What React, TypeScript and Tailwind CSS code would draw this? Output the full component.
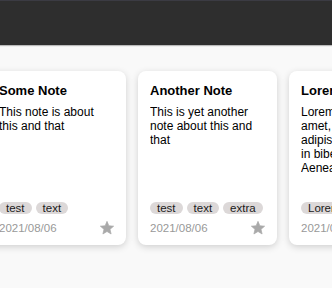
import React from "react";

type Note = { title: string; body: string; tags: string[]; date: string };

const notes: Note[] = [
  {
    title: "Some Note",
    body: "This note is about this and that",
    tags: ["test", "text"],
    date: "2021/08/06",
  },
  {
    title: "Another Note",
    body: "This is yet another note about this and that",
    tags: ["test", "text", "extra"],
    date: "2021/08/06",
  },
  {
    title: "Lorem Ipsum",
    body: "Lorem ipsum dolor sit amet, consectetur adipiscing elit. Fusce in bibendum nisl. Aenean vitae",
    tags: ["Lorem ipsum"],
    date: "2021/08/06",
  },
];

function Star() {
  return (
    <svg width="16" height="16" viewBox="0 0 24 24" className="mr-[-1px] shrink-0" fill="#a9a9a9">
      <path
        d="M12 17.27L18.18 21l-1.64-7.03L22 9.24l-7.19-.61L12 2 9.19 8.63 2 9.24l5.46 4.73L5.82 21z"
        stroke="#a9a9a9"
        strokeWidth="1"
        strokeLinejoin="round"
      />
    </svg>
  );
}

function Card({ note }: { note: Note }) {
  return (
    <div className="flex h-[174px] w-[139px] shrink-0 flex-col rounded-[8px] bg-white px-3 pb-[10px] pt-3 shadow-[0_2px_7px_rgba(0,0,0,0.17)]">
      <div className="text-[13px] font-bold leading-[15px] text-black whitespace-nowrap">{note.title}</div>
      <div className="mt-[7px] flex-1 overflow-hidden text-[12px] leading-[14px] text-black">{note.body}</div>
      <div className="flex gap-[4px] whitespace-nowrap">
        {note.tags.map((t) => (
          <span
            key={t}
            className="rounded-full bg-[#dcd8d8] px-[7px] text-[11.5px] leading-[12px] text-[#1a1a1a]"
          >
            {t}
          </span>
        ))}
      </div>
      <div className="mt-[7px] flex h-[14px] items-center justify-between">
        <span className="text-[11.5px] leading-[14px] text-[#999] whitespace-nowrap">{note.date}</span>
        <Star />
      </div>
    </div>
  );
}

export default function App() {
  return (
    <div
      className="flex h-[288px] w-[332px] flex-col overflow-hidden bg-[#f9f9f9]"
      style={{ fontFamily: '"Liberation Sans", Arial, sans-serif' }}
    >
      <div className="h-[45px] shrink-0 border-t border-[#3b3b43] bg-[#2e2e2e] shadow-[0_1px_1px_rgba(0,0,0,0.25)]" />
      <div className="flex gap-3 pt-[26px] ml-[-13px]">
        {notes.map((n) => (
          <Card key={n.title} note={n} />
        ))}
      </div>
    </div>
  );
}
